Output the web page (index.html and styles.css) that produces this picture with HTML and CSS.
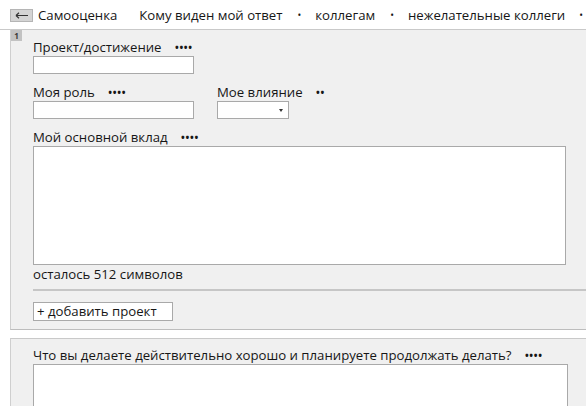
FILE: index.html
```html
<!DOCTYPE html>
<html lang="ru">
<head>
<meta charset="utf-8">
<link rel="stylesheet" href="styles.css">
</head>
<body>
<div class="topbar">
  <span class="back"><svg width="14" height="7" viewBox="0 0 14 7"><path d="M1 3.5H13M1 3.5L4 0.8M1 3.5L4 6.2" stroke="#333" stroke-width="1.2" fill="none"/></svg></span>
  <span class="title">Самооценка</span>
  <span class="who">Кому виден мой ответ</span>
  <span class="dot">•</span>
  <span class="opt">коллегам</span>
  <span class="dot">•</span>
  <span class="opt">нежелательные коллеги</span>
  <span class="dot">•</span>
</div>
<section class="panel first">
  <span class="badge">1</span>
  <div class="field">
    <div class="label">Проект/достижение <span class="dots">••••</span></div>
    <div class="input w161"></div>
  </div>
  <div class="row">
    <div class="field">
      <div class="label">Моя роль <span class="dots">••••</span></div>
      <div class="input w161"></div>
    </div>
    <div class="field">
      <div class="label">Мое влияние <span class="dots">••</span></div>
      <div class="select"><span class="caret"></span></div>
    </div>
  </div>
  <div class="field">
    <div class="label">Мой основной вклад <span class="dots">••••</span></div>
    <div class="textarea"></div>
  </div>
  <div class="counter">осталось 512 символов</div>
  <div class="sep"></div>
  <div class="add">+ добавить проект</div>
</section>
<section class="panel second">
  <div class="field">
    <div class="label">Что вы делаете действительно хорошо и планируете продолжать делать? <span class="dots">••••</span></div>
    <div class="textarea big"></div>
  </div>
</section>
</body>
</html>
```

FILE: styles.css
```css
html, body {
  margin: 0;
  padding: 0;
  background: #ffffff;
  font-family: "Open Sans", "Noto Sans", sans-serif;
  font-size: 13.2px;
  color: #161616;
  overflow: hidden;
}
.topbar {
  height: 30px;
  display: flex;
  align-items: center;
  border-bottom: 1px solid #c9c9c9;
  box-sizing: border-box;
  white-space: nowrap;
  padding-top: 1px;
}
.topbar > span { flex-shrink: 0; }
.back {
  margin-left: 10px;
  width: 23px;
  height: 13px;
  box-sizing: border-box;
  background: #d4d4d4;
  border: 1px solid #b5b5b5;
  display: flex;
  align-items: center;
  justify-content: center;
}
.title { margin-left: 5px; }
.who { margin-left: 22px; }
.dot { margin-left: 15px; margin-right: 14px; font-size: 10px; }
.dot:last-child { margin-left: 14px; margin-right: 0; }
.panel {
  position: relative;
  margin-left: 10px;
  background: #f0f0f0;
  border-left: 1px solid #cfcfcf;
  border-top: 1px solid #c9c9c9;
  border-bottom: 1px solid #bdbdbd;
  padding-left: 22px;
  box-sizing: border-box;
}
.panel.first {
  margin-top: -1px;
  height: 301px;
  padding-top: 8px;
}
.panel.second {
  margin-top: 8px;
  height: 100px;
  padding-top: 7px;
}
.badge {
  position: absolute;
  left: 0;
  top: 0;
  width: 11px;
  height: 11px;
  background: #c2c2c2;
  color: #3a3a3a;
  font-size: 8px;
  font-weight: bold;
  line-height: 11px;
  text-align: center;
}
.label {
  line-height: 18px;
  height: 18px;
  white-space: nowrap;
}
.dots {
  margin-left: 10px;
  font-size: 10px;
  letter-spacing: 0.7px;
  font-weight: bold;
  vertical-align: 1px;
}
.input, .select, .textarea, .add {
  background: #ffffff;
  border: 1px solid #a9a9a9;
  box-sizing: border-box;
}
.input { height: 18px; }
.w161 { width: 161px; }
.row {
  display: flex;
  gap: 23px;
  margin-top: 9px;
}
.row + .field { margin-top: 9px; }
.select {
  width: 72px;
  height: 18px;
  position: relative;
}
.caret {
  position: absolute;
  right: 5px;
  top: 7px;
  border-left: 2.5px solid transparent;
  border-right: 2.5px solid transparent;
  border-top: 3px solid #333;
}
.textarea {
  width: 533px;
  height: 119px;
}
.textarea.big {
  width: 535px;
  height: 60px;
}
.counter {
  line-height: 18px;
}
.sep {
  height: 2px;
  background: #c6c6c6;
  margin-top: 6px;
}
.add {
  margin-top: 11px;
  width: 140px;
  height: 19px;
  line-height: 17px;
  padding-left: 3px;
}
```
